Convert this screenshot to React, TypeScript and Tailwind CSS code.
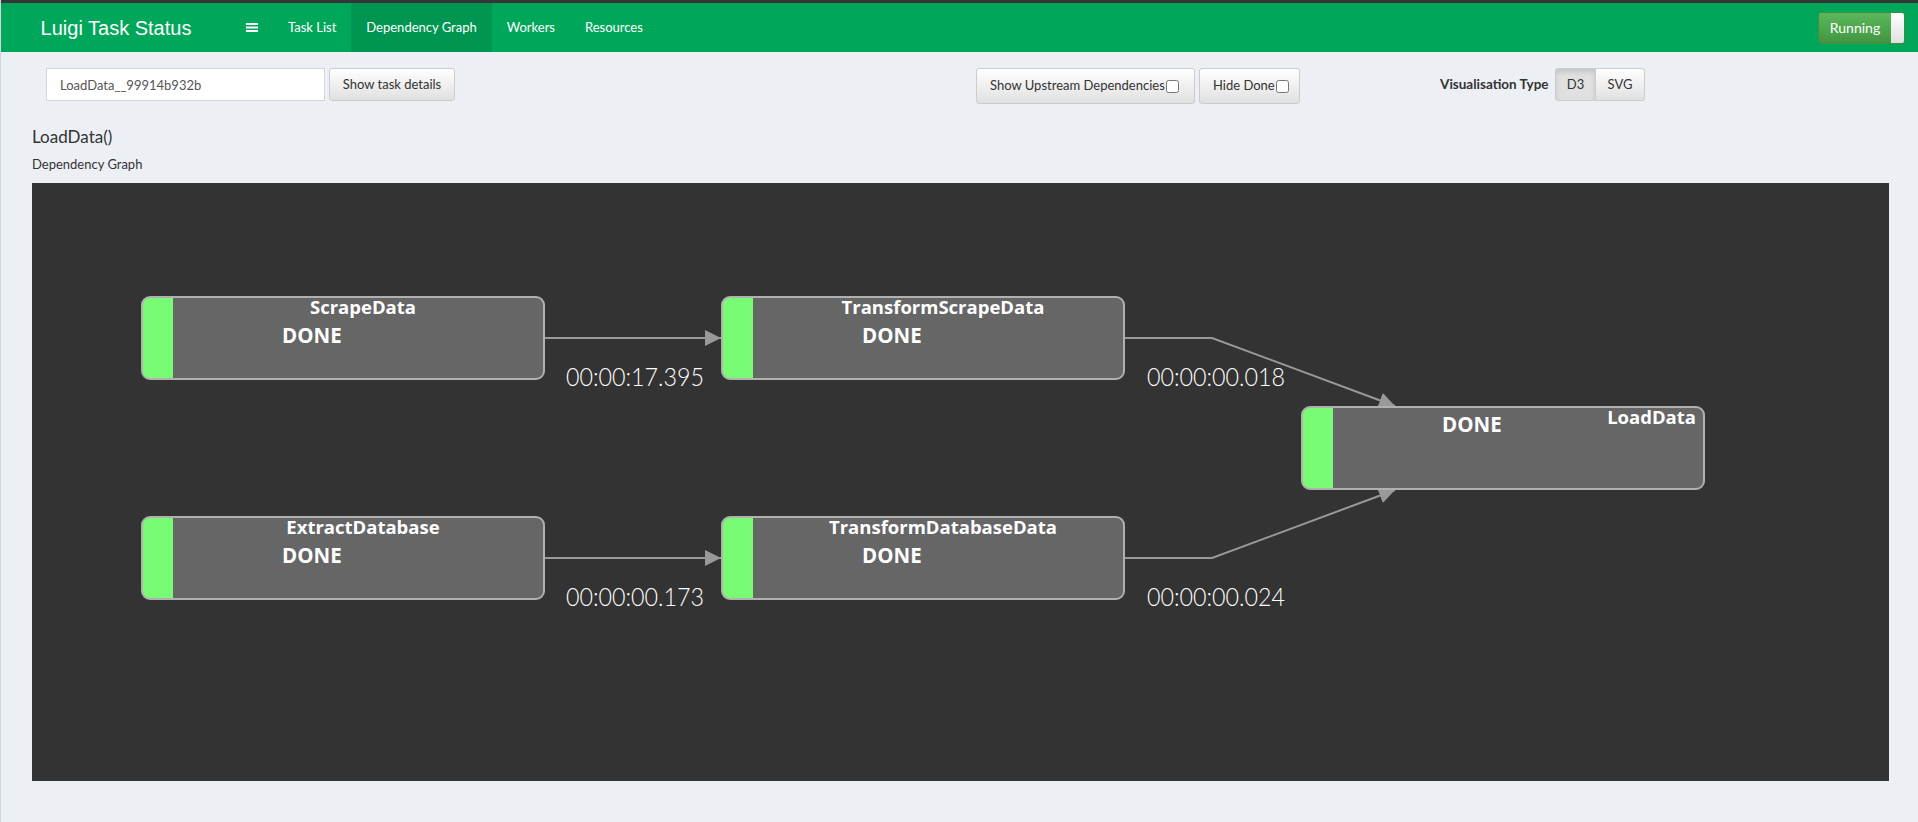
import React from 'react'

type Node = { id: string; label: string; x: number; y: number; titleX: number; titleAnchor: 'middle' | 'end'; doneY: number }

const W = 402
const H = 82

const NODES: Node[] = [
  { id: 'n1', label: 'ScrapeData', x: 110, y: 114, titleX: 221, titleAnchor: 'middle', doneY: 46 },
  { id: 'n2', label: 'TransformScrapeData', x: 690, y: 114, titleX: 221, titleAnchor: 'middle', doneY: 46 },
  { id: 'n3', label: 'ExtractDatabase', x: 110, y: 334, titleX: 221, titleAnchor: 'middle', doneY: 46 },
  { id: 'n4', label: 'TransformDatabaseData', x: 690, y: 334, titleX: 221, titleAnchor: 'middle', doneY: 46 },
  { id: 'n5', label: 'LoadData', x: 1270, y: 224, titleX: 394, titleAnchor: 'end', doneY: 25 },
]

const EDGES = [
  { d: 'M512,155 H689', label: '00:00:17.395', lx: 534, ly: 203 },
  { d: 'M512,375 H689', label: '00:00:00.173', lx: 534, ly: 423 },
  { d: 'M1092,155 L1180,155 L1363,223', label: '00:00:00.018', lx: 1115, ly: 203 },
  { d: 'M1092,375 L1180,375 L1363,307', label: '00:00:00.024', lx: 1115, ly: 423 },
]

function TaskNode({ n }: { n: Node }) {
  return (
    <g>
      <clipPath id={`clip-${n.id}`}>
        <rect x={n.x} y={n.y} width={W} height={H} rx={8} />
      </clipPath>
      <rect x={n.x} y={n.y} width={W} height={H} rx={8} fill="#666" />
      <rect x={n.x} y={n.y} width={31} height={H} fill="#78fc73" clipPath={`url(#clip-${n.id})`} />
      <rect x={n.x} y={n.y} width={W} height={H} rx={8} fill="none" stroke="#b0b0b0" strokeWidth={2} />
      <text
        x={n.x + n.titleX}
        y={n.y + 17}
        textAnchor={n.titleAnchor}
        fill="#fff"
        fontFamily="'Open Sans', sans-serif"
        fontWeight={700}
        fontSize={18.5}
      >
        {n.label}
      </text>
      <text x={n.x + 140} y={n.y + n.doneY} fill="#fff" fontFamily="'Open Sans', sans-serif" fontWeight={700} fontSize={20.5}>
        DONE
      </text>
    </g>
  )
}

function Graph() {
  return (
    <svg width="100%" height="598" className="block">
      <defs>
        <marker id="arrow" viewBox="0 0 10 10" refX="10" refY="5" markerWidth="16" markerHeight="16" markerUnits="userSpaceOnUse" orient="auto">
          <path d="M0,0 L10,5 L0,10 z" fill="#999" />
        </marker>
      </defs>
      {EDGES.map((e) => (
        <g key={e.label}>
          <path d={e.d} fill="none" stroke="#999" strokeWidth={2} markerEnd="url(#arrow)" />
          <text
            x={e.lx}
            y={e.ly}
            fill="#fff"
            fontFamily="Lato, sans-serif"
            fontWeight={300}
            fontSize={25}
            textLength={138}
            lengthAdjust="spacingAndGlyphs"
          >
            {e.label}
          </text>
        </g>
      ))}
      {NODES.map((n) => (
        <TaskNode key={n.id} n={n} />
      ))}
    </svg>
  )
}

function Bars() {
  return (
    <svg width="12" height="9" viewBox="0 0 12 9">
      <rect x="0" y="0" width="12" height="2" fill="#fff" />
      <rect x="0" y="3.5" width="12" height="2" fill="#fff" />
      <rect x="0" y="7" width="12" height="2" fill="#fff" />
    </svg>
  )
}

const btn =
  'flex items-center border border-[#ccc] rounded-[3px] bg-linear-to-b from-white to-[#e0e0e0] text-[#333] text-[13px]'

export default function App() {
  return (
    <div className="w-full h-[822px] bg-[#ecf0f5] border-l border-[#d2d6de] font-['Lato',sans-serif] overflow-hidden">
      <div className="h-[3px] bg-[#363636]" />
      <nav className="h-[49px] bg-[#00a65a] flex items-stretch text-white">
        <div className="w-[230px] flex items-center justify-center font-['Liberation_Sans',Arial,sans-serif] text-[20px]">
          Luigi Task Status
        </div>
        <div className="px-[15px] flex items-center">
          <Bars />
        </div>
        <div className="px-[15px] flex items-center text-[13px]">Task List</div>
        <div className="px-[15px] flex items-center text-[13px] bg-[#009551]">Dependency Graph</div>
        <div className="px-[15px] flex items-center text-[13px]">Workers</div>
        <div className="px-[15px] flex items-center text-[13px]">Resources</div>
        <div className="ml-auto mr-[13px] flex items-center">
          <div className="flex h-[32px] rounded-[3px] border border-[#3e8f3e] overflow-hidden">
            <div className="w-[72px] flex items-center justify-center bg-linear-to-b from-[#5cb85c] to-[#419641] text-[14px] text-white">
              Running
            </div>
            <div className="w-[13px] bg-linear-to-b from-white to-[#e0e0e0]" />
          </div>
        </div>
      </nav>

      <div className="pt-[16px] flex items-start h-[52px]">
        <input
          readOnly
          value="LoadData__99914b932b"
          className="ml-[45px] w-[279px] h-[33px] bg-white border border-[#d2d6de] px-[13px] text-[13px] text-[#555] outline-none font-['Lato',sans-serif]"
        />
        <div className={`${btn} ml-[4px] h-[33px] w-[126px] justify-center`}>Show task details</div>
        <div className={`${btn} ml-[521px] h-[36px] w-[219px] pl-[13px]`}>
          Show Upstream Dependencies
          <input type="checkbox" className="ml-[1px] w-[13px] h-[13px] m-0" />
        </div>
        <div className={`${btn} ml-[4px] h-[36px] w-[101px] pl-[13px]`}>
          Hide Done
          <input type="checkbox" className="ml-[1px] w-[13px] h-[13px] m-0" />
        </div>
        <div className="ml-[140px] w-[112px] h-[33px] flex items-center text-[13.5px] font-bold text-[#333]">Visualisation Type</div>
        <div className="ml-[3px] flex h-[33px]">
          <div className="w-[41px] flex items-center justify-center border border-[#ccc] rounded-l-[3px] bg-[#e0e0e0] shadow-[inset_0_3px_5px_rgba(0,0,0,0.125)] text-[13px] text-[#333]">
            D3
          </div>
          <div className="w-[49px] flex items-center justify-center border border-l-0 border-[#ccc] rounded-r-[3px] bg-linear-to-b from-white to-[#e0e0e0] text-[13px] text-[#333]">
            SVG
          </div>
        </div>
      </div>

      <div className="ml-[31px] mt-[23px] h-[20px] leading-[20px] text-[17px] text-[#333]">LoadData()</div>
      <div className="ml-[31px] mt-[9px] h-[16px] leading-[16px] text-[13px] text-[#333]">Dependency Graph</div>
      <div className="ml-[31px] mt-[11px] w-[1857px] h-[598px] bg-[#333]">
        <Graph />
      </div>
    </div>
  )
}
